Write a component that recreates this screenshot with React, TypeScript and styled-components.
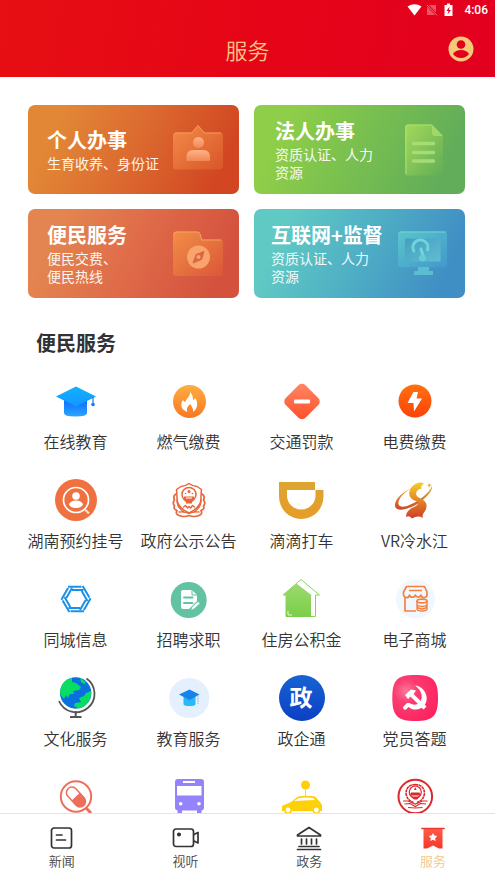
import React from "react";
import styled, { createGlobalStyle } from "styled-components";

const GlobalStyle = createGlobalStyle`
  * { box-sizing: border-box; }
  body {
    margin: 0;
    background: #fff;
    color: #333;
    font-family: "Noto Sans CJK SC", "Noto Sans", sans-serif;
  }
  a { color: inherit; text-decoration: none; }
  svg { display: block; flex: none; }
`;

const Screen = styled.div`
  display: flex;
  flex-direction: column;
  height: 100vh;
`;

const Header = styled.header`
  flex: none;
  background: linear-gradient(100deg, #e60f13 0%, #e60517 50%, #e2001f 100%);
`;

const StatusBar = styled.div`
  display: flex;
  align-items: center;
  justify-content: flex-end;
  height: 20px;
  padding-right: 7px;
  color: #fff;
  font: 500 12px/20px Roboto, sans-serif;
`;

const StatusTime = styled.span`
  margin-left: 5px;
`;

const TitleBar = styled.div`
  display: grid;
  grid-template-columns: 40px 1fr 40px;
  align-items: center;
  height: 57px;
  padding: 0 14px;
`;

const PageTitle = styled.h1`
  grid-column: 2;
  margin: 0;
  color: #f6c882;
  font-size: 22px;
  font-weight: 350;
  line-height: 28px;
  text-align: center;
`;

const ProfileButton = styled.button`
  display: flex;
  justify-content: center;
  padding: 0;
  border: 0;
  background: none;
  cursor: pointer;
`;

const Content = styled.main`
  flex: 1;
  min-height: 0;
  overflow-y: auto;
  scrollbar-width: none;
`;

const CardGrid = styled.section`
  display: grid;
  grid-template-columns: 1fr 1fr;
  gap: 15px;
  padding: 28px 30px 0 28px;
`;

const Card = styled.a<{ $from: string; $via: string; $to: string; $inset: number }>`
  display: flex;
  align-items: center;
  height: 89px;
  padding: 0 15px 0 ${(p) => p.$inset}px;
  border-radius: 7px;
  background: linear-gradient(115deg, ${(p) => p.$from} 15%, ${(p) => p.$via} 50%, ${(p) => p.$to} 88%);
  color: #fff;
`;

const CardText = styled.div`
  flex: 1;
  min-width: 0;
  white-space: nowrap;
`;

const CardTitle = styled.h2`
  margin: 0 0 2px;
  font-size: 20px;
  font-weight: 700;
  line-height: 24px;
`;

const CardNote = styled.p`
  margin: 0;
  font-size: 14px;
  line-height: 18px;
  white-space: pre;
  opacity: 0.92;
`;

const SectionTitle = styled.h2`
  margin: 30px 36px 19px;
  font-size: 20px;
  font-weight: 700;
  line-height: 30px;
  color: #303236;
`;

const ServiceGrid = styled.section`
  display: grid;
  grid-template-columns: repeat(4, 1fr);
  row-gap: 23px;
  padding: 0 24px 20px 19px;
`;

const Service = styled.a`
  display: flex;
  flex-direction: column;
  align-items: center;
  gap: 4px;
  font-size: 16px;
  font-weight: 350;
  line-height: 24px;
  white-space: nowrap;
`;

const TabBar = styled.nav`
  flex: none;
  display: grid;
  grid-template-columns: repeat(4, 1fr);
  padding: 10px 0;
  border-top: 1px solid #e4e4e4;
  background: #fff;
`;

const Tab = styled.a<{ $active?: boolean }>`
  display: flex;
  flex-direction: column;
  align-items: center;
  color: ${(p) => (p.$active ? "#f1c789" : "#444")};
  font-size: 13px;
  font-weight: 350;
  line-height: 18px;
`;

const Icon = ({ children }: { children: React.ReactNode }) => (
  <svg width="48" height="48" viewBox="0 0 48 48" fill="none" aria-hidden="true">{children}</svg>
);
const CardIcon = ({ children }: { children: React.ReactNode }) => (
  <svg width="52" height="52" viewBox="0 0 52 52" fill="none" aria-hidden="true">{children}</svg>
);
const TabIcon = ({ children }: { children: React.ReactNode }) => (
  <svg width="28" height="28" viewBox="0 0 28 28" fill="none" stroke="#333" strokeWidth="1.7" strokeLinecap="round" strokeLinejoin="round" aria-hidden="true">{children}</svg>
);
const Gradient = ({ id, from, to, across }: { id: string; from: string; to: string; across?: boolean }) => (
  <linearGradient id={id} x1="0" y1="0" x2={across ? 1 : 0} y2="1">
    <stop offset="0" stopColor={from} />
    <stop offset="1" stopColor={to} />
  </linearGradient>
);

const cards = [
  {
    title: "个人办事", note: "生育收养、身份证", from: "#e28736", via: "#dc6a30", to: "#d24722", inset: 19,
    icon: (
      <CardIcon>
        <Gradient id="board" from="#f28c48" to="#d95528" across />
        <Gradient id="person" from="#ffb587" to="#f28555" />
        <path d="M4 8.500H19.500L26 1L32.500 8.500H48Q51 8.500 51 11.500V42.500Q51 45.500 48 45.500H4Q1 45.500 1 42.500V11.500Q1 8.500 4 8.500Z" fill="url(#board)" />
        <path d="M3 9H19.500L26 1.500L32.500 9H49" stroke="#f59a5c" strokeWidth="1" />
        <circle cx="26.500" cy="18.500" r="5.500" fill="url(#person)" />
        <path d="M14.500 37V33Q14.500 26 21.500 26H31Q38 26 38 33V37Z" fill="url(#person)" />
      </CardIcon>
    ),
  },
  {
    title: "法人办事", note: "资质认证、人力\n资源", from: "#8fce48", via: "#78bf50", to: "#62ad59", inset: 21,
    icon: (
      <CardIcon>
        <Gradient id="doc" from="#a3d95a" to="#62ad57" across />
        <path d="M9.500 0.500H34L45 12V49Q45 51.500 42 51.500H9.500Q7 51.500 7 49V3Q7 0.500 9.500 0.500Z" fill="url(#doc)" />
        <path d="M8 50V3Q8 1 10 1H34" stroke="#acdf71" strokeWidth="1" />
        <path d="M34 0.500L45 12H37Q34 12 34 9Z" fill="#a0d866" />
        <path d="M15.500 19.500H35.500M15.500 28.500H35.500M15.500 37H35.500" stroke="#a5dc78" strokeWidth="3.500" strokeLinecap="round" />
      </CardIcon>
    ),
  },
  {
    title: "便民服务", note: "便民交费、\n便民热线", from: "#e38550", via: "#df6b49", to: "#d4523d", inset: 19,
    icon: (
      <CardIcon>
        <Gradient id="folder" from="#f18f46" to="#db5638" across />
        <path d="M4 3.500H25Q28 3.500 28.500 6.500L29.500 11.500H48Q51 11.500 51 14.500V45Q51 48 48 48H4Q1 48 1 45V6.500Q1 3.500 4 3.500Z" fill="url(#folder)" />
        <path d="M2 7Q2 4 5 4H25Q28 4 28.500 7L29.500 12H49" stroke="#f69e60" strokeWidth="1" />
        <circle cx="26.500" cy="29" r="11.500" fill="#f9a36d" />
        <path d="M32 23.500L29.500 31.500L21 35L24 26.500Z" fill="#dc6642" stroke="#dc6642" strokeLinejoin="round" />
        <circle cx="26.500" cy="29" r="2" fill="#f9a36d" />
      </CardIcon>
    ),
  },
  {
    title: "互联网+监督", note: "资质认证、人力\n资源", from: "#60c9c4", via: "#4fafc4", to: "#408fc4", inset: 17,
    icon: (
      <CardIcon>
        <Gradient id="frame" from="#5bc5cd" to="#4398cb" across />
        <Gradient id="glass" from="#449fc0" to="#62bcd1" across />
        <path d="M20 38H31V43H35V47H16V43H20Z" fill="#5bbdd0" />
        <rect x="0" y="3.500" width="49" height="35.500" rx="3" fill="url(#frame)" />
        <path d="M1 5Q1 4 3 4H48" stroke="#70d3d4" />
        <rect x="7" y="10.500" width="35.500" height="23" fill="url(#glass)" />
        <path d="M16.500 24A7.500 7.500 0 1 1 29 23" stroke="#70d5d8" strokeWidth="3" />
        <path d="M23 21L25 28" stroke="#73d6d9" strokeWidth="3" strokeLinecap="round" />
        <circle cx="24.500" cy="30" r="3.500" fill="#66cbd4" />
      </CardIcon>
    ),
  },
];

/* Angles of the six double strips that form the hexagonal swirl. */
const swirl = [0, 60, 120, 180, 240, 300];

const services: { name: string; bare?: boolean; icon: React.ReactNode }[] = [
  {
    name: "在线教育",
    icon: (
      <Icon>
        <Gradient id="capBody" from="#0a6dff" to="#2aa5ff" />
        <Gradient id="capTop" from="#10b2ff" to="#1496ff" />
        <path d="M12 23H35V36Q35 39.500 23.500 39.500T12 36Z" fill="url(#capBody)" />
        <path d="M24 9.500L44 19.500L24 29.500L4 19.500Z" fill="url(#capTop)" />
        <path d="M41 20V27" stroke="#1679ff" strokeWidth="1.200" />
        <circle cx="41" cy="27.500" r="1.800" fill="#1679ff" />
      </Icon>
    ),
  },
  {
    name: "燃气缴费",
    icon: (
      <Icon>
        <Gradient id="gas" from="#ffad42" to="#f97722" />
        <circle cx="24.500" cy="24.500" r="16.500" fill="url(#gas)" />
        <path d="M25 15C29 19 27 21 28.500 23Q30 22.500 30 20.500C33 25 33.500 31 28 35C28.500 31 26.500 30 25.500 27C22.500 29 21 32 22.500 35C16.500 33 14.500 28 18 23Q19 25 20.500 25C21 21 25.500 20 25 15Z" fill="#fff" />
      </Icon>
    ),
  },
  {
    name: "交通罚款",
    icon: (
      <Icon>
        <Gradient id="fine" from="#ff8a68" to="#ff4c27" across />
        <rect x="10" y="10.500" width="28" height="28" rx="5" fill="url(#fine)" transform="rotate(45 24 24.500)" />
        <rect x="16" y="22.500" width="16" height="4" rx="1" fill="#fff" />
      </Icon>
    ),
  },
  {
    name: "电费缴费",
    icon: (
      <Icon>
        <Gradient id="power" from="#ff7211" to="#fb4207" />
        <circle cx="24" cy="24" r="16.500" fill="url(#power)" />
        <path d="M22.500 15H27L25.500 21.500H31L23 34.500L22.500 26H16.500Z" fill="#fff" />
      </Icon>
    ),
  },
  {
    name: "湖南预约挂号",
    icon: (
      <Icon>
        <circle cx="24" cy="24" r="21" fill="#f0703f" />
        <circle cx="24" cy="24" r="12.500" stroke="#fff" strokeWidth="1.700" />
        <circle cx="24" cy="20" r="3.800" fill="#fff" />
        <ellipse cx="24" cy="28.300" rx="6.800" ry="3.700" fill="#fff" />
        <path d="M33 33.500L37 37.500" stroke="#ffe0d0" strokeWidth="2.200" />
      </Icon>
    ),
  },
  {
    name: "政府公示公告",
    icon: (
      <Icon>
        <g stroke="#e7663b" strokeWidth="1.500" strokeLinejoin="round" strokeLinecap="round">
          <path d="M24 7.500Q28 10.500 32 10.500L36.500 13.500C35.500 19 37 24 34.500 28.500Q31 34 24 37Q17 34 13.500 28.500C11 24 12.500 19 11.500 13.500L16 10.500Q20 10.500 24 7.500Z" />
          <circle cx="24" cy="18.500" r="7" />
          <path d="M11 18Q7.500 20 9.500 24Q7 27 9.500 30Q8 33 12 34.500Q10 38 14 39.500Q19 41.500 24 39.500Q29 41.500 34 39.500Q38 38 36 34.500Q40 33 38.500 30Q41 27 38.500 24Q40.500 20 37 18" strokeWidth="1.700" />
          <path d="M12 24Q11.500 31 19 36M36 24Q36.500 31 29 36M14 36Q20 35.500 24 37.500Q28 35.500 34 36" strokeWidth="1.300" />
          <path d="M18.500 31L20.500 29.500L22.500 32L24 30.500L25.500 32L27.500 29.500L29.500 31" strokeWidth="1.500" />
        </g>
        <path d="M19 20.500H29V24L27 26V27.500H21V26L19 24Z" fill="#e7663b" />
        <g fill="#e7663b"><circle cx="24" cy="15.500" r="1.500" /><circle cx="20.500" cy="17.500" r="0.800" /><circle cx="27.500" cy="17.500" r="0.800" /></g>
        <path d="M21 22H27" stroke="#fff" />
      </Icon>
    ),
  },
  {
    name: "滴滴打车",
    icon: (
      <Icon>
        <Gradient id="ride" from="#dca532" to="#e79c28" />
        <path fillRule="evenodd" d="M1 6H37V14H45.500V20.500A22.250 22.500 0 0 1 1 20.500ZM9 14V20.500A14.300 14.300 0 0 0 37.500 20.500V14Z" fill="url(#ride)" />
      </Icon>
    ),
  },
  {
    name: "VR冷水江",
    icon: (
      <Icon>
        <Gradient id="river" from="#f3cf2a" to="#cf3b27" />
        <Gradient id="orbit" from="#eab03a" to="#d14529" />
        <path d="M22 11.500C12 15 3 24 4 30C5 37 20 33 30 25.500C37 20 42 14 41 10C39 15 34 19.500 29 23C19 30 9 33.500 7.500 28C6.500 23 14 15 22 11.500Z" fill="url(#orbit)" />
        <path d="M33 7.500C29 5 22 8 19.500 13C16 19 20 23.500 25 25C29 26.500 27 29 23 31C18 33 15 36 15 41Q18 39 21 42.500Q27 39 32 42C30 37 36 36 35.500 29C35 24 30 23.500 27 21C23 17.500 26 13 31 12.500C29 11 31 9 33 7.500Z" fill="url(#river)" />
        <path d="M38 7L39 8.500L41 9L39 10L38 12L37.500 10L36 9L37.500 8.500Z" fill="#eeb732" />
      </Icon>
    ),
  },
  {
    name: "同城信息",
    icon: (
      <Icon>
        <g stroke="#1a91e8" strokeWidth="2">
          {swirl.map((angle) => (
            <path key={angle} d="M-8 -12.300H5.500M-4 -8.900H7.500" transform={`translate(24 24) rotate(${angle})`} />
          ))}
        </g>
      </Icon>
    ),
  },
  {
    name: "招聘求职",
    icon: (
      <Icon>
        <circle cx="23.700" cy="25" r="18" fill="#63c2a2" />
        <path d="M18 15H27L32 20V26L24 34H18Q16 34 16 32V17Q16 15 18 15Z" fill="#fff" />
        <path d="M27 15V20H32" stroke="#63c2a2" />
        <path d="M19 22.500H27.500M19 28H27.500" stroke="#63c2a2" strokeWidth="2" strokeLinecap="round" />
        <path d="M26 35L27 32L33 26.500L35 28.500L29 34Z" fill="#fff" stroke="#63c2a2" strokeWidth="0.600" />
      </Icon>
    ),
  },
  {
    name: "住房公积金",
    icon: (
      <Icon>
        <Gradient id="house" from="#9dda70" to="#79cf47" />
        <path d="M5 20L23 4.500L41.500 20H37.500V41.500H8V20Z" fill="#fff" stroke="#8ad55d" strokeLinejoin="round" />
        <path d="M5 20L18.500 8.500L34 20.500H33V42H8V20Z" fill="url(#house)" />
        <path d="M10 36V40H14" stroke="#fff" strokeWidth="0.800" />
      </Icon>
    ),
  },
  {
    name: "电子商城",
    icon: (
      <Icon>
        <circle cx="24.500" cy="24" r="19.500" fill="#f0f7fe" />
        <g stroke="#f5813f" strokeWidth="1.700" strokeLinejoin="round">
          <path d="M15.500 11.500H33.500L36 17V19A3 3 0 0 1 30 20A3 3 0 0 1 24.300 20A3 3 0 0 1 18.500 20A3 3 0 0 1 12.500 19V17Z" />
          <path d="M18 15.500H31M14 22V36H25" />
          <ellipse cx="31" cy="26" rx="5" ry="1.900" />
          <path d="M26 26V34Q26 36 31 36T36 34V26M26 29.500Q27 31.500 31 31.500T36 29.500M26 32Q28 34 31 34T36 32" strokeWidth="1.400" />
        </g>
      </Icon>
    ),
  },
  {
    name: "文化服务",
    icon: (
      <Icon>
        <circle cx="23.700" cy="19" r="15.700" fill="#0871df" />
        <path d="M20 4C12 5 8 12 8 19Q9 22 12 25L14 21L16 24L18 20L22 20L21 17L27 16L29 13L24 9L20 8Z" fill="#07dc63" />
        <path d="M39 17L34 19L32 22L27 24L29 28L23 29L22 32L27 34.500C34 33 40 26 39 17ZM28 4L34 8L32 10L29 8Z" fill="#07dc63" />
        <path d="M34.500 4.500A18.500 18.500 0 1 1 7 27" stroke="#555" strokeWidth="1.800" />
        <path d="M23.700 37V43M18 43H29.500" stroke="#555" strokeWidth="2" />
      </Icon>
    ),
  },
  {
    name: "教育服务",
    icon: (
      <Icon>
        <circle cx="24.300" cy="24" r="20" fill="#e5f0fe" />
        <path d="M18.500 22H30.500V30Q30.500 32 24.500 32T18.500 30Z" fill="#2bb8f7" />
        <path d="M24.500 15.500L34.500 20.500L24.500 26L14 20.500Z" fill="#1683e9" />
        <path d="M33 21V30" stroke="#9caabd" strokeWidth="0.800" strokeDasharray="2 0.600" />
      </Icon>
    ),
  },
  {
    name: "政企通",
    icon: (
      <Icon>
        <Gradient id="gov" from="#1763d3" to="#0d3fc5" />
        <circle cx="24" cy="24" r="23" fill="url(#gov)" />
        <text x="23" y="32" fill="#fff" fontSize="23" fontWeight="700" textAnchor="middle">政</text>
      </Icon>
    ),
  },
  {
    name: "党员答题",
    icon: (
      <Icon>
        <radialGradient id="party" cx="0.300" cy="0.350" r="0.750">
          <stop offset="0" stopColor="#fd779b" />
          <stop offset="0.350" stopColor="#fb3c71" />
          <stop offset="1" stopColor="#fb2460" />
        </radialGradient>
        <path d="M24.300 1C42 1 47 6 47 24S42 47 24.300 47S1.300 42 1.300 24S6 1 24.300 1Z" fill="url(#party)" />
        <path d="M24 11.500C34 12.500 38.500 24 34 30.500C30 36.500 22 37 17.500 33L15 35.500Q12 36.500 12 33L16 29H18.500C24 32.500 29 30 30.500 25C31.500 20 29 15 24 11.500Z" fill="#fff" />
        <path d="M14 21L20 15.500L25 16.500L22.500 20L35.500 32.500L32.500 35.500L19.500 22.500L17 25Z" fill="#fff" />
      </Icon>
    ),
  },
  {
    name: "在线问诊",
    bare: true,
    icon: (
      <Icon>
        <circle cx="24" cy="23.500" r="15.200" stroke="#ec6f5d" strokeWidth="2" />
        <path d="M34 35L39 40" stroke="#ec6f5d" strokeWidth="3" />
        <g transform="rotate(-43 24 24)">
          <rect x="18.500" y="12.500" width="11" height="23" rx="5.500" fill="#fff" stroke="#ec6f5d" strokeWidth="1.500" />
          <path d="M18.500 23.500H29.500V30A5.500 5.500 0 0 1 18.500 30Z" fill="#ec6f5d" />
        </g>
      </Icon>
    ),
  },
  {
    name: "公交出行",
    bare: true,
    icon: (
      <Icon>
        <path d="M12.500 34H17V42H12.500ZM32 34H36.500V42H32Z" fill="#9484fb" />
        <rect x="10" y="6" width="29" height="31.500" rx="3" fill="#9484fb" />
        <path d="M12 13H36.500V22.500H12ZM18 8H30V10H18Z" fill="#fff" />
        <circle cx="15.700" cy="30.700" r="1.800" fill="#fff" />
        <circle cx="34" cy="30.700" r="1.800" fill="#fff" />
      </Icon>
    ),
  },
  {
    name: "代驾服务",
    bare: true,
    icon: (
      <Icon>
        <circle cx="27.500" cy="12" r="4.500" fill="#fed008" />
        <path d="M27.500 16V23" stroke="#fed008" strokeWidth="0.800" />
        <path d="M4 33L13 29L20 23.500Q29 22 37 23.500L42 29L44 32V38H4Z" fill="#fed008" />
        <path d="M16 28L21 25Q29 24 35 25L37 27Z" fill="#fff" />
        <circle cx="10" cy="37" r="3.200" fill="#fff" stroke="#fed008" strokeWidth="1.500" />
        <circle cx="38.300" cy="37" r="3.200" fill="#fff" stroke="#fed008" strokeWidth="1.500" />
      </Icon>
    ),
  },
  {
    name: "警务服务",
    bare: true,
    icon: (
      <Icon>
        <g stroke="#dc272d">
          <circle cx="24.300" cy="23.500" r="16.800" strokeWidth="2" />
          <circle cx="24.300" cy="19" r="6" strokeWidth="1.200" />
          <path d="M24.300 11.500Q33 12 33.500 20Q33 27 26 29.500M24.300 11.500Q15.500 12 15 20Q15.500 27 22.500 29.500" strokeWidth="1.600" strokeDasharray="3 0.500" />
          <path d="M12 28L17 28L24.300 31L31.500 28L36.500 28M13.500 31L19 30.500L24.300 33.500L29.500 30.500L35 31M17 34.500L24.300 35L31.500 34.500" strokeWidth="1.200" />
        </g>
        <path d="M20 19.500H28.500L29.500 22.500H19ZM20 23.500H29L26 26.500H23ZM24.300 14L25.500 17H23Z" fill="#dc272d" />
      </Icon>
    ),
  },
];

const tabs = [
  { name: "新闻", icon: <TabIcon><rect x="3.500" y="4" width="20" height="20" rx="2.500" /><path d="M8.500 11H14M8.500 16H17.500" /></TabIcon> },
  { name: "视听", icon: <TabIcon><rect x="1.500" y="5" width="20" height="17.500" rx="2.500" /><path d="M22 10.500L26 8.500V19L22 17" /><circle cx="7" cy="10.500" r="1.200" fill="#333" /></TabIcon> },
  { name: "政务", icon: <TabIcon><path d="M2.500 11L14 3.500L25.500 11V12H2.500ZM6.500 15V20M11.500 15V20M16.500 15V20M21.500 15V20M4 22.500H24M2.500 25.500H25.500" /></TabIcon> },
  {
    name: "服务",
    icon: (
      <TabIcon>
        <Gradient id="flag" from="#ff5c48" to="#f83529" />
        <path d="M4.500 5H23.500V24.500H20L14 21.500L8 24.500H4.500Z" fill="url(#flag)" stroke="none" />
        <path d="M3 4.500H25" stroke="#ee3b31" />
        <path d="M14 9L15.400 11.600L18.200 12.100L16.200 14.200L16.600 17L14 15.800L11.400 17L11.800 14.200L9.800 12.100L12.600 11.600Z" fill="#fff" stroke="none" />
      </TabIcon>
    ),
  },
];

export default function App() {
  return (
    <Screen>
      <GlobalStyle />
      <Header>
        <StatusBar>
          <svg width="52" height="14" viewBox="0 0 52 14" aria-hidden="true">
            <path d="M0.500 3.500Q7.500 -1 14.500 3.500L7.500 12.500Z" fill="#fff" />
            <path d="M22 2H29V12H20V4Z" fill="#f25160" />
            <path d="M20 1.500L30 12.500" stroke="#e4001b" strokeWidth="2.500" />
            <path d="M20 2L30 12.500" stroke="#f2707b" />
            <path d="M37.500 2H40V0.500H43V2H45.500V13H37.500Z" fill="#fff" />
            <path d="M42.500 3.500L39.500 8H41.500L40.500 11.500L44 7H42Z" fill="#e4001b" />
          </svg>
          <StatusTime>4:06</StatusTime>
        </StatusBar>
        <TitleBar>
          <PageTitle>服务</PageTitle>
          <ProfileButton aria-label="个人中心">
            <svg width="26" height="26" viewBox="0 0 26 26" aria-hidden="true">
              <circle cx="13" cy="13" r="12.500" fill="#f4ca7a" />
              <circle cx="13" cy="8.500" r="4.300" fill="#e3001c" />
              <path d="M5 18Q7.500 14 13 14T21 18Q18 22 13 22T5 18Z" fill="#e3001c" />
            </svg>
          </ProfileButton>
        </TitleBar>
      </Header>
      <Content>
        <CardGrid>
          {cards.map((card) => (
            <Card key={card.title} href="#" $from={card.from} $via={card.via} $to={card.to} $inset={card.inset}>
              <CardText>
                <CardTitle>{card.title}</CardTitle>
                <CardNote>{card.note}</CardNote>
              </CardText>
              {card.icon}
            </Card>
          ))}
        </CardGrid>
        <SectionTitle>便民服务</SectionTitle>
        <ServiceGrid>
          {services.map((service) => (
            <Service key={service.name} href="#" aria-label={service.name}>
              {service.icon}
              {!service.bare && <span>{service.name}</span>}
            </Service>
          ))}
        </ServiceGrid>
      </Content>
      <TabBar>
        {tabs.map((tab) => (
          <Tab key={tab.name} href="#" $active={tab.name === "服务"}>
            {tab.icon}
            {tab.name}
          </Tab>
        ))}
      </TabBar>
    </Screen>
  );
}
